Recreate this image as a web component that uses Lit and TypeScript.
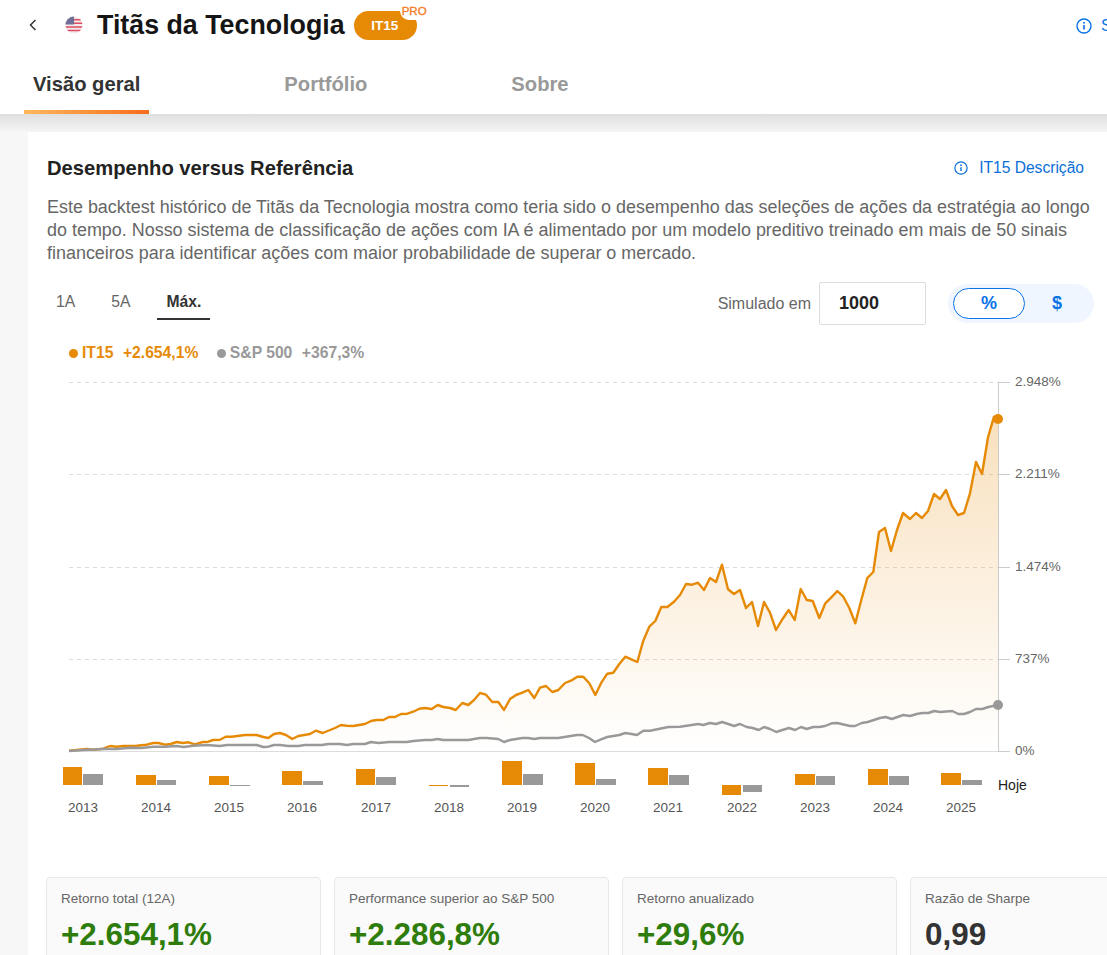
import { LitElement, html, svg, css } from "lit";
import { customElement } from "lit/decorators.js";

// zoomed crop coords (3x) -> page coords
const z = (ox: number, oy: number, p: number[]) => {
  const out: [number, number][] = [];
  for (let i = 0; i < p.length; i += 2) out.push([ox + p[i] / 3, oy + p[i + 1] / 3]);
  return out;
};

const orange = [
  ...z(50, 640, [57,332,110,327,130,329,160,326,180,318,200,320,220,318,260,317,290,314,310,309,325,309,345,314,362,312,380,306,398,309,415,307,435,313,458,306,475,305,490,300,510,299,527,290,545,290,585,285,620,285,640,291,655,294,672,282,690,279,708,285,727,297,745,288,780,282,797,272,818,279,855,264,873,255,890,257,910,258,945,252,963,243,980,240,1000,240,1017,231,1035,231,1053,222,1072,221,1090,215,1108,206,1125,204,1145,207,1163,195,1180,201,1200,204,1217,210,1237,189,1255,195,1272,180,1290,159,1308,164,1327,186,1345,186,1362,210,1380,177,1398,165,1417,158,1435,150,1453,174,1470,143,1488,138]),
  ...z(540, 640, [37,156,55,150,75,129]),
  ...z(560, 540, [33,422,52,410,70,410,88,430,106,465,124,428,142,401,160,398,178,372,196,350,214,358,232,366,250,302,268,260,286,243,304,201,322,201,342,185,360,165,378,132,396,134,414,128,432,150,450,114,468,126,486,74,504,148,522,162,540,150,558,204,576,186,594,258,612,186,630,218,648,270,668,236,686,210,704,240,722,147,740,180,758,183,778,234,796,190,814,172,832,153,850,170,868,204,886,250,904,180,922,114,940,96]),
  ...z(800, 380, [237,456,255,444,273,513,291,450,309,399,330,417,348,399,366,414,384,393,402,342,420,357,438,330,456,378,474,405,492,399,510,340,528,246,546,282,564,172,582,110,594,117]),
];

const gray = [
  ...z(50, 640, [57,333,100,330,160,327,200,327,240,323,275,324,310,320,345,320,380,318,400,321,430,317,470,315,510,318,530,315,620,315,640,321,655,320,672,315,690,315,715,318,745,318,765,315,815,315,835,312,870,312,890,315,910,312,945,312,963,306,985,309,1017,306,1070,306,1090,303,1125,300,1145,300,1163,297,1180,300,1255,300,1290,294,1310,294,1345,297,1362,306,1380,300,1417,294,1435,294,1453,297,1470,294,1500,294]),
  ...z(540, 640, [55,294,92,288,110,285,128,285,147,294,165,306,183,298,202,291,238,285,256,279,275,282,291,285,310,272,330,272,385,261,420,260,475,252,490,255,510,249,528,252,546,246,565,252,582,258,600,252,620,261,638,264,656,270,672,261,690,267,709,276,727,270,747,264,765,270,783,261,800,267,820,261,838,261,855,258,875,250,892,249,930,258,945,258,965,249,983,246,1020,234,1037,231,1055,237,1090,225,1110,228,1130,222,1147,219,1165,219,1183,213,1200,216,1237,213,1255,222,1272,222,1290,216,1308,207,1327,207,1345,201,1375,195]),
];

const toPoints = (p: [number, number][]) => p.map(([x, y]) => `${x.toFixed(1)},${y.toFixed(1)}`).join(" ");

const BASE = 785;
// year, orange x, orange edge y, gray x, gray edge y
const bars = [
  { y: 2013, ox: 63, ow: 19, ot: 767, gx: 83, gw: 20, gt: 774 },
  { y: 2014, ox: 136, ow: 20, ot: 775, gx: 157, gw: 19, gt: 780 },
  { y: 2015, ox: 209, ow: 20, ot: 776, gx: 230, gw: 20, gt: 786 },
  { y: 2016, ox: 282, ow: 20, ot: 771, gx: 303, gw: 20, gt: 781 },
  { y: 2017, ox: 356, ow: 19, ot: 769, gx: 376, gw: 20, gt: 777 },
  { y: 2018, ox: 429, ow: 19, ot: 786, gx: 450, gw: 19, gt: 787 },
  { y: 2019, ox: 502, ow: 20, ot: 761, gx: 523, gw: 20, gt: 774 },
  { y: 2020, ox: 575, ow: 20, ot: 763, gx: 596, gw: 20, gt: 779 },
  { y: 2021, ox: 648, ow: 20, ot: 768, gx: 669, gw: 20, gt: 775 },
  { y: 2022, ox: 722, ow: 19, ot: 795, gx: 743, gw: 19, gt: 792 },
  { y: 2023, ox: 795, ow: 20, ot: 774, gx: 816, gw: 19, gt: 776 },
  { y: 2024, ox: 868, ow: 20, ot: 769, gx: 889, gw: 20, gt: 776 },
  { y: 2025, ox: 941, ow: 20, ot: 773, gx: 962, gw: 20, gt: 780 },
];

const ticks = [
  { y: 382.5, label: "2.948%" },
  { y: 474.5, label: "2.211%" },
  { y: 567.5, label: "1.474%" },
  { y: 659.5, label: "737%" },
  { y: 751.5, label: "0%" },
];

const stats = [
  { label: "Retorno total (12A)", value: "+2.654,1%", pos: true },
  { label: "Performance superior ao S&P 500", value: "+2.286,8%", pos: true },
  { label: "Retorno anualizado", value: "+29,6%", pos: true },
  { label: "Razão de Sharpe", value: "0,99", pos: false },
];

const infoIcon = (size: number) => html`
  <svg class="info" width=${size} height=${size} viewBox="0 0 16 16" fill="none" stroke="currentColor">
    <circle cx="8" cy="8" r="7" stroke-width="1.4"></circle>
    <path d="M8 7v4.5" stroke-width="1.6"></path>
    <circle cx="8" cy="4.8" r="1" fill="currentColor" stroke="none"></circle>
  </svg>
`;

@customElement("app-root")
export class AppRoot extends LitElement {
  static styles = css`
    :host {
      display: block;
      width: 1107px;
      height: 955px;
      overflow: hidden;
      background: #f7f7f7;
      font-family: "Liberation Sans", Arial, sans-serif;
      color: #333;
    }
    .top {
      background: #fff;
      height: 114px;
    }
    .title-row {
      height: 50px;
      display: flex;
      align-items: center;
      position: relative;
      white-space: nowrap;
    }
    .back {
      margin-left: 28px;
      display: block;
    }
    .flag {
      margin-left: 27px;
      display: block;
    }
    h1 {
      margin: 0 0 0 14px;
      font-size: 26.8px;
      font-weight: 700;
      color: #151515;
    }
    .badge {
      margin-left: 9px;
      width: 63px;
      height: 29px;
      border-radius: 15px;
      background: #e68a06;
      color: #fff;
      font-size: 13.5px;
      font-weight: 700;
      display: flex;
      align-items: center;
      justify-content: center;
      box-sizing: border-box;
      padding-right: 1px;
      position: relative;
    }
    .pro {
      position: absolute;
      left: 46px;
      top: -7px;
      padding: 0 0 1px 2px;
      line-height: 15px;
      font-size: 11.5px;
      font-weight: 400;
      color: #f7791e;
      background: #fff;
      border-radius: 0 0 0 9px;
      -webkit-text-stroke: 0.3px #f7791e;
    }
    .top-info {
      position: absolute;
      left: 1076px;
      top: 17px;
      color: #0a73e6;
      display: flex;
      align-items: center;
      gap: 9px;
      font-size: 16px;
    }
    .tabs {
      display: flex;
      gap: 126px;
      margin-left: 24px;
      height: 64px;
    }
    .tab {
      padding: 0 9px;
      font-size: 20.2px;
      font-weight: 700;
      color: #999;
      line-height: 68px;
      height: 60px;
      box-sizing: content-box;
    }
    .tab.on {
      color: #333;
      border-bottom: 4px solid;
      border-image: linear-gradient(90deg, #fdb95c, #f76b1c) 1;
    }
    .shade {
      height: 18px;
      background: linear-gradient(#dfdfdf, #f5f5f5);
    }
    .card {
      margin-left: 28px;
      background: #fff;
      padding: 24px 13px 0 19px;
      height: 823px;
      box-sizing: border-box;
    }
    .head {
      display: flex;
      justify-content: space-between;
      align-items: center;
      height: 24px;
    }
    h2 {
      margin: 0;
      font-size: 20.2px;
      font-weight: 700;
      color: #222;
    }
    .desc {
      display: flex;
      align-items: center;
      gap: 11px;
      color: #0a6fd8;
      font-size: 15.6px;
      padding-right: 10px;
    }
    p {
      margin: 16px 0 0;
      font-size: 17.95px;
      line-height: 23px;
      color: #666;
      width: 1050px;
    }
    .controls {
      margin-top: 17px;
      height: 43px;
      display: flex;
      justify-content: space-between;
    }
    .periods {
      display: flex;
      gap: 18px;
      height: 38px;
    }
    .period {
      padding: 0 9px;
      font-size: 15.7px;
      line-height: 39px;
      color: #666;
    }
    .period.on {
      font-weight: 700;
      color: #333;
      border-bottom: 2px solid #333;
    }
    .sim {
      display: flex;
      align-items: center;
    }
    .sim-label {
      font-size: 16px;
      color: #666;
    }
    .amount {
      margin-left: 8px;
      width: 107px;
      height: 43px;
      box-sizing: border-box;
      border: 1px solid #ddd;
      border-radius: 2px;
      padding-left: 19px;
      font-size: 18px;
      font-weight: 700;
      line-height: 41px;
      color: #222;
    }
    .toggle {
      margin-left: 22px;
      width: 146px;
      height: 39px;
      box-sizing: border-box;
      border-radius: 20px;
      background: #f0f6ff;
      padding: 4px 5px;
      display: flex;
      color: #0a73e6;
      font-size: 18px;
      font-weight: 700;
      text-align: center;
      line-height: 29px;
    }
    .toggle div {
      width: 72px;
      box-sizing: border-box;
      border: 1px solid transparent;
      border-radius: 16px;
    }
    .toggle .on {
      background: #fff;
      border-color: #0a73e6;
    }
    .toggle div:last-child {
      width: 64px;
      margin-left: 0;
    }
    .legend {
      margin: 18px 0 0 22px;
      height: 20px;
      display: flex;
      align-items: center;
      font-size: 15.7px;
      font-weight: 700;
      white-space: nowrap;
    }
    .dot {
      width: 9px;
      height: 9px;
      border-radius: 50%;
      background: currentColor;
      margin-right: 4px;
    }
    .series {
      display: flex;
      align-items: center;
      gap: 9.5px;
    }
    .series.a {
      color: #e68a06;
    }
    .series.b {
      color: #999;
      margin-left: 18.5px;
    }
    .series span.name {
      margin-left: -9.5px;
    }
    .chart {
      display: block;
      margin: 7px 0 0 -19px;
    }
    .chart text {
      font-family: "Liberation Sans", Arial, sans-serif;
    }
    .stats {
      margin: 57px 0 0 -1px;
      display: flex;
      gap: 13px;
      width: 1100px;
    }
    .stat {
      flex: none;
      width: 275px;
      height: 120px;
      box-sizing: border-box;
      border: 1px solid #e8e8e8;
      border-radius: 4px;
      background: #fafafa;
      padding: 13px 14px;
    }
    .stat-label {
      font-size: 13.5px;
      line-height: 16px;
      color: #666;
    }
    .stat-value {
      margin-top: 10px;
      font-size: 31.4px;
      line-height: 36px;
      font-weight: 700;
      color: #333;
    }
    .stat-value.pos {
      color: #2e7d0c;
    }
  `;

  chart() {
    return html`
      <svg class="chart" width="1079" height="450" viewBox="28 370 1079 450">
        <defs>
          <linearGradient id="area" gradientUnits="userSpaceOnUse" x1="0" y1="419" x2="0" y2="751">
            <stop offset="0" stop-color="#e68a06" stop-opacity="0.26"></stop>
            <stop offset="1" stop-color="#e68a06" stop-opacity="0"></stop>
          </linearGradient>
        </defs>
        ${ticks.map((t, i) => svg`
          <line x1="69" x2="998" y1=${t.y} y2=${t.y} stroke="#dcdcdc" stroke-dasharray=${i === 4 ? "none" : "4 4"}></line>
          <line x1="998" x2="1010" y1=${t.y} y2=${t.y} stroke="#ccc"></line>
          <text x="1015" y=${t.y + 3.5} font-size="13.5" fill="#666">${t.label}</text>
        `)}
        <line x1="998.5" x2="998.5" y1="382" y2="752" stroke="#ccc"></line>
        <polygon points="${toPoints(orange)} 998,751 69,751" fill="url(#area)"></polygon>
        <polyline points=${toPoints(orange)} fill="none" stroke="#e68a06" stroke-width="2.4" stroke-linejoin="round"></polyline>
        <polyline points=${toPoints(gray)} fill="none" stroke="#999" stroke-width="2.4" stroke-linejoin="round"></polyline>
        <circle cx="998" cy="419" r="5" fill="#e68a06"></circle>
        <circle cx="998" cy="705" r="5" fill="#999"></circle>
        ${bars.map((b) => svg`
          <rect x=${b.ox} y=${Math.min(b.ot, BASE)} width=${b.ow} height=${Math.abs(BASE - b.ot)} fill="#e68a06"></rect>
          <rect x=${b.gx} y=${Math.min(b.gt, BASE)} width=${b.gw} height=${Math.abs(BASE - b.gt)} fill="#999"></rect>
          <text x=${b.ox + 20} y="812" font-size="13.5" fill="#555" text-anchor="middle">${b.y}</text>
        `)}
        <text x="998" y="790" font-size="14" fill="#222">Hoje</text>
      </svg>
    `;
  }

  render() {
    return html`
      <div class="top">
        <div class="title-row">
          <svg class="back" width="10" height="12" viewBox="0 0 10 12" fill="none" stroke="#333" stroke-width="1.5">
            <path d="M7.5 1 2.5 6l5 5"></path>
          </svg>
          <svg class="flag" width="18" height="18" viewBox="0 0 18 18">
            <defs><clipPath id="fc"><circle cx="9" cy="9" r="8.5"></circle></clipPath></defs>
            <g clip-path="url(#fc)">
              <rect width="18" height="18" fill="#f4e9ea"></rect>
              <path d="M0 3h18v1.5H0zM0 6.6h18v1.5H0zM0 10.2h18v1.5H0zM0 13.8h18v1.5H0z" fill="#dc4f63"></path>
              <rect width="9" height="8.5" fill="#6f6f98"></rect>
            </g>
          </svg>
          <h1>Titãs da Tecnologia</h1>
          <div class="badge">IT15<span class="pro">PRO</span></div>
          <div class="top-info">${infoIcon(16)}<span>Sobre</span></div>
        </div>
        <div class="tabs">
          <div class="tab on">Visão geral</div>
          <div class="tab">Portfólio</div>
          <div class="tab">Sobre</div>
        </div>
      </div>
      <div class="shade"></div>
      <div class="card">
        <div class="head">
          <h2>Desempenho versus Referência</h2>
          <div class="desc">${infoIcon(14)}<span>IT15 Descrição</span></div>
        </div>
        <p>Este backtest histórico de Titãs da Tecnologia mostra como teria sido o desempenho das seleções de ações da estratégia ao longo do tempo. Nosso sistema de classificação de ações com IA é alimentado por um modelo preditivo treinado em mais de 50 sinais financeiros para identificar ações com maior probabilidade de superar o mercado.</p>
        <div class="controls">
          <div class="periods">
            <div class="period">1A</div>
            <div class="period">5A</div>
            <div class="period on">Máx.</div>
          </div>
          <div class="sim">
            <span class="sim-label">Simulado em</span>
            <div class="amount">1000</div>
            <div class="toggle"><div class="on">%</div><div>$</div></div>
          </div>
        </div>
        <div class="legend">
          <div class="series a"><i class="dot"></i><span class="name">IT15</span><span>+2.654,1%</span></div>
          <div class="series b"><i class="dot"></i><span class="name">S&P 500</span><span>+367,3%</span></div>
        </div>
        ${this.chart()}
        <div class="stats">
          ${stats.map((s) => html`
            <div class="stat">
              <div class="stat-label">${s.label}</div>
              <div class="stat-value ${s.pos ? "pos" : ""}">${s.value}</div>
            </div>
          `)}
        </div>
      </div>
    `;
  }
}
